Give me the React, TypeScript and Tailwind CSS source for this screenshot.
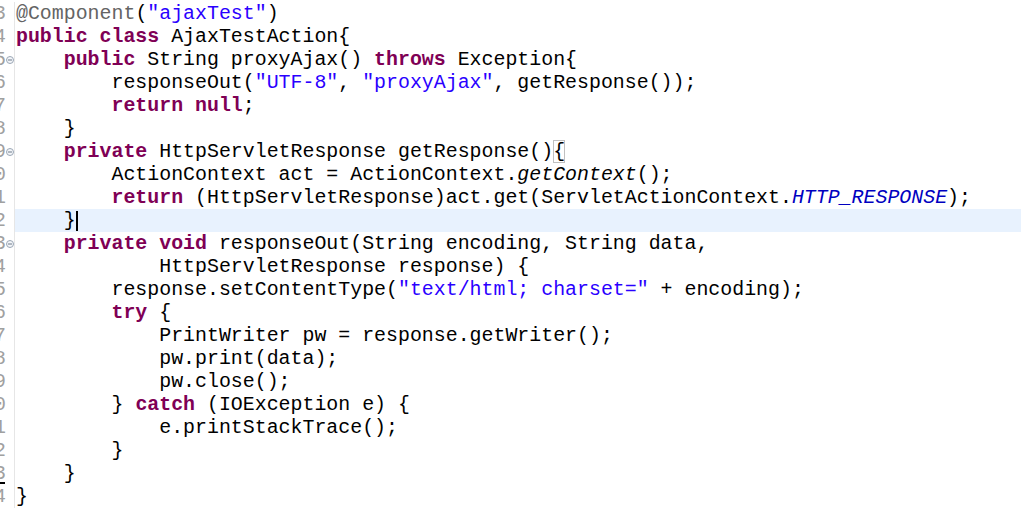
import React from 'react'

type Tok = { t: string; k?: 'kw' | 'str' | 'ann' | 'it' | 'const' | 'box' }

const kw = (t: string): Tok => ({ t, k: 'kw' })
const str = (t: string): Tok => ({ t, k: 'str' })
const p = (t: string): Tok => ({ t })

const lines: { num: string; fold?: boolean; tokens: Tok[] }[] = [
  { num: '3', tokens: [{ t: '@Component', k: 'ann' }, p('('), str('"ajaxTest"'), p(')')] },
  { num: '4', tokens: [kw('public'), p(' '), kw('class'), p(' AjaxTestAction{')] },
  {
    num: '5',
    fold: true,
    tokens: [p('    '), kw('public'), p(' String proxyAjax() '), kw('throws'), p(' Exception{')]
  },
  {
    num: '6',
    tokens: [p('        responseOut('), str('"UTF-8"'), p(', '), str('"proxyAjax"'), p(', getResponse());')]
  },
  { num: '7', tokens: [p('        '), kw('return'), p(' '), kw('null'), p(';')] },
  { num: '8', tokens: [p('    }')] },
  {
    num: '9',
    fold: true,
    tokens: [p('    '), kw('private'), p(' HttpServletResponse getResponse()'), { t: '{', k: 'box' }]
  },
  {
    num: '0',
    tokens: [p('        ActionContext act = ActionContext.'), { t: 'getContext', k: 'it' }, p('();')]
  },
  {
    num: '1',
    tokens: [
      p('        '),
      kw('return'),
      p(' (HttpServletResponse)act.get(ServletActionContext.'),
      { t: 'HTTP_RESPONSE', k: 'const' },
      p(');')
    ]
  },
  { num: '2', tokens: [p('    }')] },
  {
    num: '3',
    fold: true,
    tokens: [p('    '), kw('private'), p(' '), kw('void'), p(' responseOut(String encoding, String data,')]
  },
  { num: '4', tokens: [p('            HttpServletResponse response) {')] },
  {
    num: '5',
    tokens: [p('        response.setContentType('), str('"text/html; charset="'), p(' + encoding);')]
  },
  { num: '6', tokens: [p('        '), kw('try'), p(' {')] },
  { num: '7', tokens: [p('            PrintWriter pw = response.getWriter();')] },
  { num: '8', tokens: [p('            pw.print(data);')] },
  { num: '9', tokens: [p('            pw.close();')] },
  { num: '0', tokens: [p('        } '), kw('catch'), p(' (IOException e) {')] },
  { num: '1', tokens: [p('            e.printStackTrace();')] },
  { num: '2', tokens: [p('        }')] },
  { num: '3', tokens: [p('    }')] },
  { num: '4', tokens: [p('}')] }
]

const tokenClass = (k?: Tok['k']) => {
  switch (k) {
    case 'kw':
      return 'font-bold text-[#7f0055]'
    case 'str':
      return 'text-[#2a00ff]'
    case 'ann':
      return 'text-[#646464]'
    case 'it':
      return 'italic'
    case 'const':
      return 'italic text-[#0000c0]'
    case 'box':
      return 'outline outline-1 outline-[#c0c0c0] -outline-offset-1'
    default:
      return ''
  }
}

const CURRENT = 9

export default function App() {
  return (
    <div
      className="w-[1021px] h-[516px] bg-white overflow-hidden pt-[2px] text-[19.9px] leading-[23px] text-black"
      style={{ fontFamily: '"Liberation Mono", "Courier New", monospace' }}
    >
      {lines.map((line, i) => (
        <div key={i} className="flex h-[23px]">
          {/* gutter */}
          <div className="relative flex w-[15px] shrink-0 border-r border-[#e6e6e6]">
            <div className="w-[6px] overflow-hidden flex justify-end">
              <span className="text-[#a0a0a0] whitespace-pre">{line.num}</span>
            </div>
            <div className="flex w-[8px] items-center justify-center">
              {line.fold && (
                <svg width="8" height="8" viewBox="0 0 8 8">
                  <circle cx="4" cy="4" r="3.5" fill="#f4f6f9" stroke="#9aa6b4" strokeWidth="1" />
                  <line x1="2" y1="4" x2="6" y2="4" stroke="#6c7a8a" strokeWidth="1" />
                </svg>
              )}
            </div>
            {i === lines.length - 1 && (
              <div className="absolute left-0 top-[-3px] w-[5px] h-[2px] bg-black" />
            )}
          </div>
          {/* code */}
          <div
            className={`flex-1 pl-px whitespace-pre flex items-center ${
              i === CURRENT ? 'bg-[#e8f2fe]' : ''
            }`}
          >
            {line.tokens.map((tok, j) => (
              <span key={j} className={tokenClass(tok.k)}>
                {tok.t}
              </span>
            ))}
            {i === CURRENT && <span className="inline-block w-[2px] h-[20px] bg-black" />}
          </div>
        </div>
      ))}
    </div>
  )
}
